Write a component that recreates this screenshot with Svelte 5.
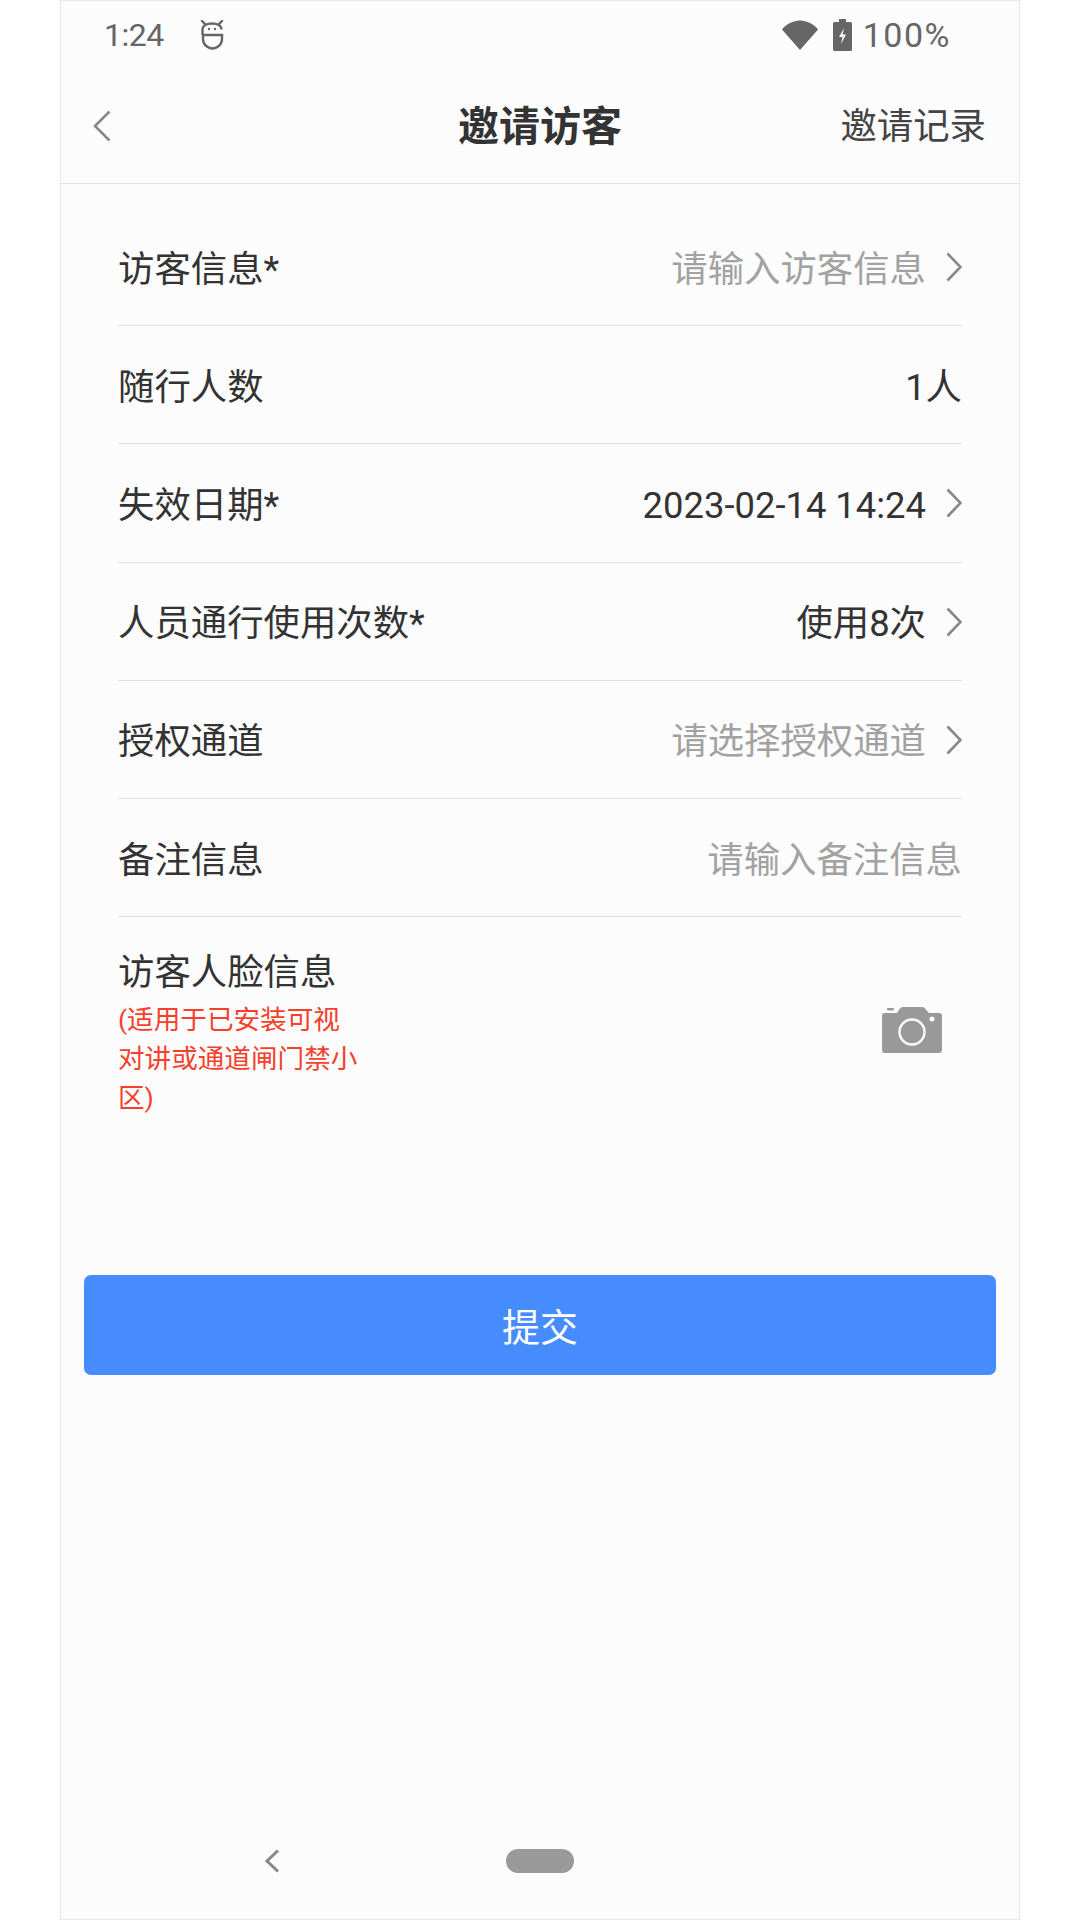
<script>
  const rows = [
    { label: '访客信息*', value: '请输入访客信息', muted: true, arrow: true },
    { label: '随行人数', value: '1人' },
    { label: '失效日期*', value: '2023-02-14 14:24', arrow: true },
    { label: '人员通行使用次数*', value: '使用8次', arrow: true },
    { label: '授权通道', value: '请选择授权通道', muted: true, arrow: true },
    { label: '备注信息', value: '请输入备注信息', muted: true }
  ];
</script>

<div class="device">
  <div class="status">
    <span class="time">1:24</span>
    <svg class="bot" width="24" height="30" viewBox="0 0 24 30" fill="none" stroke="#666" stroke-width="2.400">
      <path d="M2 1l3 3M22 1l-3 3" stroke-linecap="round" />
      <path d="M2.500 15V9.500C2.500 5.500 7 3.500 12 3.500s9.500 2 9.500 6" />
      <path d="M3 15h19v4a9.500 9.500 0 0 1-19 0z" />
      <circle cx="9" cy="9" r="1.200" fill="#666" stroke="none" />
      <circle cx="15" cy="9" r="1.200" fill="#666" stroke="none" />
    </svg>
    <span class="grow"></span>
    <svg width="36" height="30" viewBox="0 0 36 30"><path d="M0 9.500C4.500 4 11 .5 18 .5s13.500 3.500 18 9L18 30z" fill="#666" /></svg>
    <svg class="battery" width="19" height="32" viewBox="0 0 19 32">
      <path d="M6 0h7v3h4.500a1.500 1.500 0 0 1 1.500 1.500v26a1.500 1.500 0 0 1-1.500 1.500h-16A1.500 1.500 0 0 1 0 30.500v-26A1.500 1.500 0 0 1 1.500 3H6z" fill="#666" />
      <path d="M11 9l-5 9h3.500L8 25l5-9.500H9.500z" fill="#fcfcfc" />
    </svg>
    <span class="percent">100%</span>
  </div>

  <header class="bar">
    <svg class="back" width="18" height="32" viewBox="0 0 18 32" fill="none" stroke="#888" stroke-width="2.600"><path d="M16.500 1.500L2 16l14.500 14.500" /></svg>
    <h1>邀请访客</h1>
    <span class="records">邀请记录</span>
  </header>

  <div class="form">
    {#each rows as row}
      <div class="row">
        <span class="label">{row.label}</span>
        <span class="value" class:muted={row.muted}>{row.value}</span>
        {#if row.arrow}
          <svg class="chevron" width="16" height="30" viewBox="0 0 16 30" fill="none" stroke="#888" stroke-width="2.600"><path d="M1.500 1.500L14.500 15 1.500 28.500" /></svg>
        {/if}
      </div>
    {/each}

    <div class="face">
      <div class="face-text">
        <div class="label">访客人脸信息</div>
        <div class="note">(适用于已安装可视对讲或通道闸门禁小区)</div>
      </div>
      <svg class="camera" width="60" height="46" viewBox="0 0 60 46">
        <path d="M3 6h12l2.500-4Q19 0 21 0h19q2 0 3.500 2L47 6h10a3 3 0 0 1 3 3v34a3 3 0 0 1-3 3H3a3 3 0 0 1-3-3V9a3 3 0 0 1 3-3z" fill="#999" />
        <rect x="5" y="1" width="7" height="2.500" rx="1" fill="#999" />
        <circle cx="30" cy="25" r="12.500" fill="none" stroke="#fcfcfc" stroke-width="2.400" />
        <circle cx="50" cy="12" r="2.500" fill="#fcfcfc" />
      </svg>
    </div>
  </div>

  <button class="submit">提交</button>

  <div class="nav">
    <svg width="16" height="24" viewBox="0 0 16 24" fill="none" stroke="#888" stroke-width="3"><path d="M14 1.500L3 12l11 10.500" /></svg>
    <span class="pill"></span>
  </div>
</div>

<style>
  :global(body) {
    background: #fff;
    font-family: Roboto, "Noto Sans CJK SC", sans-serif;
  }

  .device {
    box-sizing: border-box;
    width: 960px;
    height: 1920px;
    margin-left: 60px;
    background: #fcfcfc;
    border: 1px solid #e8e8e8;
    display: flex;
    flex-direction: column;
    position: relative;
  }

  .status {
    flex: none;
    height: 67px;
    display: flex;
    align-items: center;
    padding: 0 68px 0 43px;
    color: #666;
    font-family: Roboto, sans-serif;
  }

  .time { width: 60px; font-size: 32px; letter-spacing: -0.5px; }
  .bot { margin-left: 36px; }
  .grow { flex: 1; }
  .battery { margin-left: 15px; }
  .percent { margin-left: 11px; font-size: 34px; letter-spacing: 1.500px; }

  .bar {
    flex: none;
    height: 116px;
    box-sizing: border-box;
    border-bottom: 1px solid #e6e0e0;
    display: flex;
    align-items: center;
    justify-content: center;
    position: relative;
    padding-bottom: 6px;
  }

  .back {
    position: absolute;
    left: 32px;
    top: 42px;
  }

  h1 {
    margin: 0;
    font-size: 41px;
    font-weight: 700;
    color: #333;
  }

  .records {
    position: absolute;
    right: 33px;
    top: 29px;
    font-size: 36.400px;
    color: #444;
  }

  .form {
    flex: none;
    padding: 24px 57px 0 57px;
  }

  .row {
    height: 118.200px;
    box-sizing: border-box;
    border-bottom: 1px solid #e4e0e0;
    padding-top: 1px;
    display: flex;
    align-items: center;
  }

  .label {
    font-size: 36.400px;
    line-height: 50px;
    color: #333;
    flex: 1;
  }

  .value { color: #333; font-size: 36.400px; line-height: 50px; }
  .row .label, .row .value { padding-top: 5px; }
  .muted { color: #a2a2a2; }
  .chevron { margin-left: 20px; }

  .face {
    display: flex;
    justify-content: space-between;
    box-sizing: border-box;
    height: 358px;
    padding: 31px 20px 0 0;
  }

  .note {
    width: 243px;
    margin-top: 3px;
    color: #f5402c;
    font-size: 26.600px;
    line-height: 38.700px;
  }

  .camera { margin-top: 59px; }

  .submit {
    flex: none;
    margin: 0 0 0 23px;
    width: 912px;
    height: 100px;
    border: none;
    border-radius: 7px;
    background: #468cfe;
    color: #fff;
    font-size: 38px;
    line-height: 46px;
    font-family: inherit;
    padding: 5px 0 0;
  }

  .nav {
    position: absolute;
    bottom: 46px;
    left: 203px;
    display: flex;
    align-items: center;
    gap: 226px;
  }

  .pill {
    width: 68px;
    height: 24px;
    border-radius: 12px;
    background: #999;
  }
</style>
